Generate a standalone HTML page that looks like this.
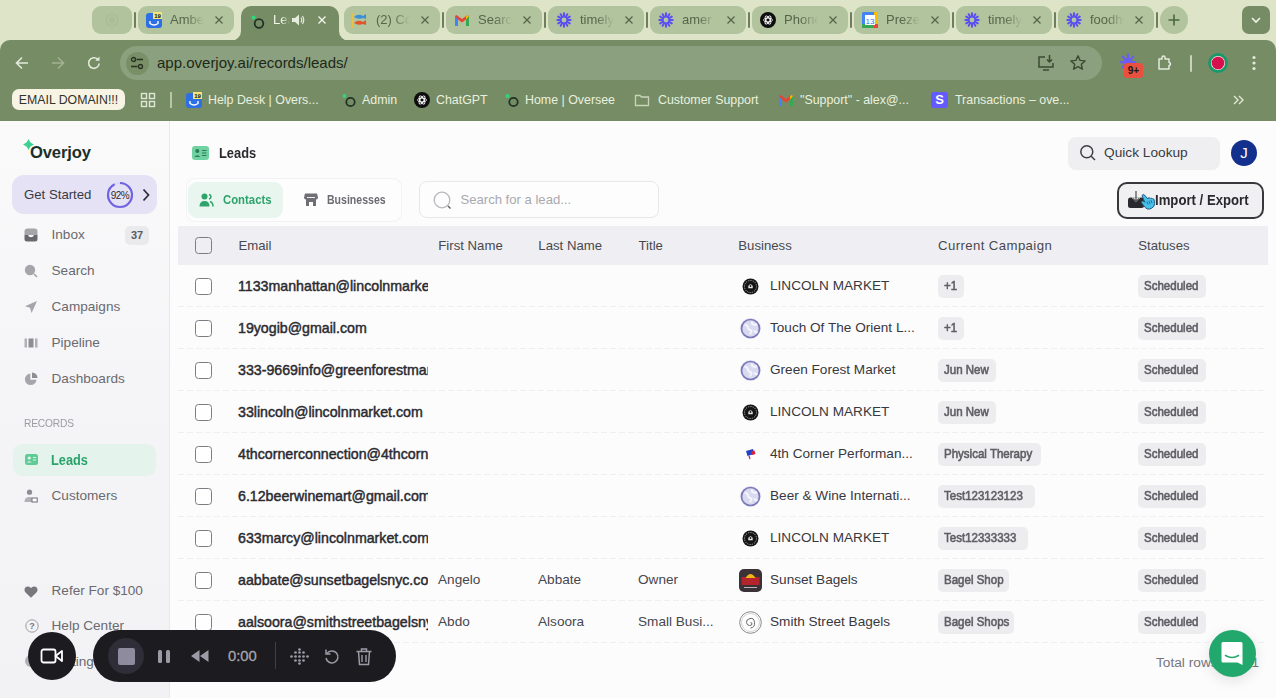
<!DOCTYPE html>
<html><head><meta charset="utf-8">
<style>
*{box-sizing:border-box;margin:0;padding:0}
html,body{width:1276px;height:698px;overflow:hidden;background:#dee4c7;font-family:"Liberation Sans",sans-serif;position:relative}
.a{position:absolute}
/* tabs */
.tab{position:absolute;top:6px;height:28px;width:96px;border-radius:9px;background:#b1c49e;overflow:hidden}
.tab .fv{position:absolute;left:8px;top:6px;width:16px;height:16px}
.tab .tt{position:absolute;left:32px;top:6px;font-size:13px;line-height:16px;color:#56664a;white-space:nowrap;width:36px;overflow:hidden;
 -webkit-mask-image:linear-gradient(90deg,#000 45%,transparent 95%)}
.tab .x{position:absolute;left:77px;top:10px;width:8px;height:8px}
.sep{position:absolute;top:12px;width:2px;height:16px;background:#6f7f5e;border-radius:1px}
#toolbar{position:absolute;left:0;top:40px;width:1276px;height:81px;background:#758c65;border-radius:10px 10px 0 0}
.bm{position:absolute;top:92px;font-size:12.4px;line-height:16px;color:#eaf0df;white-space:nowrap}
.bmi{position:absolute;top:92px;width:16px;height:16px}

#app{position:absolute;left:0;top:121px;width:1276px;height:577px;background:#fcfcfd;overflow:hidden}
#side{position:absolute;left:0;top:0;width:170px;height:577px;background:linear-gradient(180deg,#fafafb 0%,#f5f5f7 45%,#f2f2f4 100%);border-right:1px solid #e9e9ec}
.nav{position:absolute;left:51.5px;font-size:13.6px;line-height:16px;color:#6a6a70;white-space:nowrap}
.ni{position:absolute;left:24px;width:14px;height:14px}
.sx{display:inline-block;transform-origin:0 50%;white-space:nowrap}
.th{position:absolute;top:117px;font-size:13.2px;line-height:16px;color:#48484e;white-space:nowrap}
.cb{position:absolute;left:195px;width:17px;height:17px;border:1.5px solid #7c7c82;border-radius:3.5px;background:#fff}
.em{position:absolute;left:238px;width:190px;overflow:hidden;font-size:14.2px;font-weight:normal;line-height:18px;color:#2a2a2f;white-space:nowrap;-webkit-text-stroke:0.45px #2a2a2f}
.em span{display:inline-block;transform:scaleX(1.0);transform-origin:0 50%}
.tx{position:absolute;font-size:13.6px;line-height:18px;color:#47474d;white-space:nowrap}
.biz{position:absolute;left:770px;font-size:13.6px;line-height:18px;color:#38383e;white-space:nowrap}
.bi{position:absolute;left:740px;width:21px;height:21px}
.tag{position:absolute;height:23px;border-radius:5px;background:#ededf0;font-size:12.4px;font-weight:normal;line-height:23px;color:#5e5e64;white-space:nowrap;padding:0 6px;-webkit-text-stroke:0.6px #5e5e64}
.tag span{display:inline-block;transform:scaleX(0.93);transform-origin:0 50%}
.rl{position:absolute;left:178px;width:1086px;height:1px;background:repeating-linear-gradient(90deg,#efeff2 0 6px,transparent 6px 9px)}
</style></head><body>

<!-- ===== TAB STRIP ===== -->
<div class="tab" style="left:92px;width:40px;background:#b0c39c"><svg class="a" style="left:12px;top:6px" width="16" height="16" viewBox="0 0 16 16"><circle cx="8" cy="8" r="6" fill="none" stroke="#abbb97" stroke-width="1.2"/><circle cx="8" cy="8" r="3" fill="#abbb97"/></svg></div>
<div class="sep" style="left:134px"></div>

<div class="tab" style="left:138px">
 <svg class="fv" viewBox="0 0 16 16"><rect x="0" y="1" width="16" height="15" rx="3" fill="#2d6fe5"/><path d="M4 9v2.5q4 3 8 0V9" stroke="#fff" stroke-width="1.4" fill="none"/><rect x="7" y="0" width="9" height="7" fill="#f8e27a"/><text x="11.5" y="6" font-size="6" font-weight="bold" text-anchor="middle" fill="#111" font-family="Liberation Sans">19</text></svg>
 <div class="tt">Amber</div>
 <svg class="x" viewBox="0 0 8 8"><path d="M0.5 0.5L7.5 7.5M7.5 0.5L0.5 7.5" stroke="#56664a" stroke-width="1.3"/></svg>
</div>

<!-- active tab -->
<div class="a" style="left:231px;top:30px;width:118px;height:11px;background:#758c65"></div>
<div class="a" style="left:231px;top:30px;width:10px;height:11px;background:#dee4c7;border-radius:0 0 10px 0"></div>
<div class="a" style="left:339px;top:30px;width:10px;height:11px;background:#dee4c7;border-radius:0 0 0 10px"></div>
<div class="a" style="left:241px;top:6px;width:98px;height:30px;background:#758c65;border-radius:10px 10px 0 0"></div>
<svg class="a" style="left:250px;top:14px" width="16" height="16" viewBox="0 0 16 16"><circle cx="9" cy="9.5" r="4.3" fill="none" stroke="#1f3326" stroke-width="1.8"/><circle cx="3.5" cy="3.5" r="2" fill="#2fd67a"/></svg>
<div class="a" style="left:273px;top:12px;font-size:13px;line-height:16px;color:#f1f5ea;width:17px;overflow:hidden;white-space:nowrap;-webkit-mask-image:linear-gradient(90deg,#000 50%,transparent 100%)">Leads</div>
<svg class="a" style="left:291px;top:13px" width="14" height="14" viewBox="0 0 14 14"><path d="M1 5h3l4-3.5v11L4 9H1z" fill="#e6ecdc"/><path d="M10 4.5q1.5 2.5 0 5M11.5 3q2.5 4 0 8" stroke="#e6ecdc" stroke-width="1.2" fill="none"/></svg>
<svg class="a" style="left:318px;top:16px" width="8" height="8" viewBox="0 0 8 8"><path d="M0.5 0.5L7.5 7.5M7.5 0.5L0.5 7.5" stroke="#f1f5ea" stroke-width="1.4"/></svg>

<div class="tab" style="left:344px">
 <svg class="fv" viewBox="0 0 16 16"><rect x="0" y="1" width="1.2" height="15" fill="#e8c44a"/><path d="M2 5q4-4 9-1l3-2v5l-3-1q-5 2-9-1z" fill="#3b8fd8"/><path d="M2 11q4-4 9-1l3-2v5l-3-1q-5 2-9-1z" fill="#e0552c"/></svg>
 <div class="tt">(2) Cool</div>
 <svg class="x" viewBox="0 0 8 8"><path d="M0.5 0.5L7.5 7.5M7.5 0.5L0.5 7.5" stroke="#56664a" stroke-width="1.3"/></svg>
</div>
<div class="sep" style="left:442px"></div>
<div class="tab" style="left:446px">
 <svg class="fv" viewBox="0 0 16 16"><path d="M1 4v10h3V7.5l4 3 4-3V14h3V4l-1.5-1L8 7 2.5 3z" fill="#ea4335"/><path d="M1 4v10h3V7.5z" fill="#4285f4"/><path d="M12 7.5V14h3V4z" fill="#34a853"/><path d="M15 4l-3 3.5V4.5L13.5 3z" fill="#fbbc04"/></svg>
 <div class="tt">Search</div>
 <svg class="x" viewBox="0 0 8 8"><path d="M0.5 0.5L7.5 7.5M7.5 0.5L0.5 7.5" stroke="#56664a" stroke-width="1.3"/></svg>
</div>
<div class="sep" style="left:544px"></div>
<div class="tab" style="left:548px">
 <svg class="fv sun" viewBox="0 0 16 16"><g fill="#5a4ff2"><rect x="7" y="0.3" width="2" height="5" rx="1" transform="rotate(0 8 8)"/><rect x="7" y="0.3" width="2" height="5" rx="1" transform="rotate(30 8 8)"/><rect x="7" y="0.3" width="2" height="5" rx="1" transform="rotate(60 8 8)"/><rect x="7" y="0.3" width="2" height="5" rx="1" transform="rotate(90 8 8)"/><rect x="7" y="0.3" width="2" height="5" rx="1" transform="rotate(120 8 8)"/><rect x="7" y="0.3" width="2" height="5" rx="1" transform="rotate(150 8 8)"/><rect x="7" y="0.3" width="2" height="5" rx="1" transform="rotate(180 8 8)"/><rect x="7" y="0.3" width="2" height="5" rx="1" transform="rotate(210 8 8)"/><rect x="7" y="0.3" width="2" height="5" rx="1" transform="rotate(240 8 8)"/><rect x="7" y="0.3" width="2" height="5" rx="1" transform="rotate(270 8 8)"/><rect x="7" y="0.3" width="2" height="5" rx="1" transform="rotate(300 8 8)"/><rect x="7" y="0.3" width="2" height="5" rx="1" transform="rotate(330 8 8)"/></g><circle cx="8" cy="8" r="4.2" fill="#5a4ff2"/><circle cx="8" cy="8" r="2.4" fill="#b1c49e"/></svg>
 <div class="tt">timely</div>
 <svg class="x" viewBox="0 0 8 8"><path d="M0.5 0.5L7.5 7.5M7.5 0.5L0.5 7.5" stroke="#56664a" stroke-width="1.3"/></svg>
</div>
<div class="sep" style="left:646px"></div>
<div class="tab" style="left:650px">
 <svg class="fv" viewBox="0 0 16 16"><g fill="#5a4ff2"><rect x="7" y="0.3" width="2" height="5" rx="1" transform="rotate(0 8 8)"/><rect x="7" y="0.3" width="2" height="5" rx="1" transform="rotate(30 8 8)"/><rect x="7" y="0.3" width="2" height="5" rx="1" transform="rotate(60 8 8)"/><rect x="7" y="0.3" width="2" height="5" rx="1" transform="rotate(90 8 8)"/><rect x="7" y="0.3" width="2" height="5" rx="1" transform="rotate(120 8 8)"/><rect x="7" y="0.3" width="2" height="5" rx="1" transform="rotate(150 8 8)"/><rect x="7" y="0.3" width="2" height="5" rx="1" transform="rotate(180 8 8)"/><rect x="7" y="0.3" width="2" height="5" rx="1" transform="rotate(210 8 8)"/><rect x="7" y="0.3" width="2" height="5" rx="1" transform="rotate(240 8 8)"/><rect x="7" y="0.3" width="2" height="5" rx="1" transform="rotate(270 8 8)"/><rect x="7" y="0.3" width="2" height="5" rx="1" transform="rotate(300 8 8)"/><rect x="7" y="0.3" width="2" height="5" rx="1" transform="rotate(330 8 8)"/></g><circle cx="8" cy="8" r="4.2" fill="#5a4ff2"/><circle cx="8" cy="8" r="2.4" fill="#b1c49e"/></svg>
 <div class="tt">amer</div>
 <svg class="x" viewBox="0 0 8 8"><path d="M0.5 0.5L7.5 7.5M7.5 0.5L0.5 7.5" stroke="#56664a" stroke-width="1.3"/></svg>
</div>
<div class="sep" style="left:748px"></div>
<div class="tab" style="left:752px">
 <svg class="fv" viewBox="0 0 16 16"><circle cx="8" cy="8" r="8" fill="#0d0d0d"/><g fill="none" stroke="#fff" stroke-width="0.9"><ellipse cx="8" cy="8" rx="4.5" ry="2" /><ellipse cx="8" cy="8" rx="4.5" ry="2" transform="rotate(60 8 8)"/><ellipse cx="8" cy="8" rx="4.5" ry="2" transform="rotate(120 8 8)"/></g></svg>
 <div class="tt">Phone</div>
 <svg class="x" viewBox="0 0 8 8"><path d="M0.5 0.5L7.5 7.5M7.5 0.5L0.5 7.5" stroke="#56664a" stroke-width="1.3"/></svg>
</div>
<div class="sep" style="left:850px"></div>
<div class="tab" style="left:854px">
 <svg class="fv" viewBox="0 0 16 16"><rect x="0" y="0" width="16" height="16" rx="1.5" fill="#4285f4"/><rect x="0" y="12" width="12" height="4" fill="#34a853"/><rect x="12" y="0" width="4" height="12" fill="#fbbc04"/><rect x="12" y="12" width="4" height="4" fill="#ea4335"/><rect x="3" y="3" width="10" height="10" fill="#fff"/><text x="8" y="11.5" font-size="8" text-anchor="middle" fill="#1a73e8" font-family="Liberation Sans">13</text></svg>
 <div class="tt">Prezentar</div>
 <svg class="x" viewBox="0 0 8 8"><path d="M0.5 0.5L7.5 7.5M7.5 0.5L0.5 7.5" stroke="#56664a" stroke-width="1.3"/></svg>
</div>
<div class="sep" style="left:952px"></div>
<div class="tab" style="left:956px">
 <svg class="fv" viewBox="0 0 16 16"><g fill="#5a4ff2"><rect x="7" y="0.3" width="2" height="5" rx="1" transform="rotate(0 8 8)"/><rect x="7" y="0.3" width="2" height="5" rx="1" transform="rotate(30 8 8)"/><rect x="7" y="0.3" width="2" height="5" rx="1" transform="rotate(60 8 8)"/><rect x="7" y="0.3" width="2" height="5" rx="1" transform="rotate(90 8 8)"/><rect x="7" y="0.3" width="2" height="5" rx="1" transform="rotate(120 8 8)"/><rect x="7" y="0.3" width="2" height="5" rx="1" transform="rotate(150 8 8)"/><rect x="7" y="0.3" width="2" height="5" rx="1" transform="rotate(180 8 8)"/><rect x="7" y="0.3" width="2" height="5" rx="1" transform="rotate(210 8 8)"/><rect x="7" y="0.3" width="2" height="5" rx="1" transform="rotate(240 8 8)"/><rect x="7" y="0.3" width="2" height="5" rx="1" transform="rotate(270 8 8)"/><rect x="7" y="0.3" width="2" height="5" rx="1" transform="rotate(300 8 8)"/><rect x="7" y="0.3" width="2" height="5" rx="1" transform="rotate(330 8 8)"/></g><circle cx="8" cy="8" r="4.2" fill="#5a4ff2"/><circle cx="8" cy="8" r="2.4" fill="#b1c49e"/></svg>
 <div class="tt">timely</div>
 <svg class="x" viewBox="0 0 8 8"><path d="M0.5 0.5L7.5 7.5M7.5 0.5L0.5 7.5" stroke="#56664a" stroke-width="1.3"/></svg>
</div>
<div class="sep" style="left:1054px"></div>
<div class="tab" style="left:1058px">
 <svg class="fv" viewBox="0 0 16 16"><g fill="#5a4ff2"><rect x="7" y="0.3" width="2" height="5" rx="1" transform="rotate(0 8 8)"/><rect x="7" y="0.3" width="2" height="5" rx="1" transform="rotate(30 8 8)"/><rect x="7" y="0.3" width="2" height="5" rx="1" transform="rotate(60 8 8)"/><rect x="7" y="0.3" width="2" height="5" rx="1" transform="rotate(90 8 8)"/><rect x="7" y="0.3" width="2" height="5" rx="1" transform="rotate(120 8 8)"/><rect x="7" y="0.3" width="2" height="5" rx="1" transform="rotate(150 8 8)"/><rect x="7" y="0.3" width="2" height="5" rx="1" transform="rotate(180 8 8)"/><rect x="7" y="0.3" width="2" height="5" rx="1" transform="rotate(210 8 8)"/><rect x="7" y="0.3" width="2" height="5" rx="1" transform="rotate(240 8 8)"/><rect x="7" y="0.3" width="2" height="5" rx="1" transform="rotate(270 8 8)"/><rect x="7" y="0.3" width="2" height="5" rx="1" transform="rotate(300 8 8)"/><rect x="7" y="0.3" width="2" height="5" rx="1" transform="rotate(330 8 8)"/></g><circle cx="8" cy="8" r="4.2" fill="#5a4ff2"/><circle cx="8" cy="8" r="2.4" fill="#b1c49e"/></svg>
 <div class="tt">foodhub</div>
 <svg class="x" viewBox="0 0 8 8"><path d="M0.5 0.5L7.5 7.5M7.5 0.5L0.5 7.5" stroke="#56664a" stroke-width="1.3"/></svg>
</div>
<div class="sep" style="left:1156px"></div>
<div class="a" style="left:1160px;top:6px;width:28px;height:28px;border-radius:14px;background:#b1c49e"></div>
<svg class="a" style="left:1168px;top:14px" width="12" height="12" viewBox="0 0 12 12"><path d="M6 0.5v11M0.5 6h11" stroke="#4c663d" stroke-width="1.6"/></svg>
<div class="a" style="left:1242px;top:6px;width:28px;height:28px;border-radius:7px;background:#758c65"></div>
<svg class="a" style="left:1250px;top:16px" width="12" height="8" viewBox="0 0 12 8"><path d="M2 2l4 4 4-4" stroke="#f1f5ea" stroke-width="1.6" fill="none"/></svg>

<!-- ===== TOOLBAR ===== -->
<div id="toolbar"></div>
<svg class="a" style="left:14px;top:55px" width="16" height="16" viewBox="0 0 16 16"><path d="M14 8H2.5M8 2.5L2.5 8 8 13.5" stroke="#e4eadb" stroke-width="1.6" fill="none"/></svg>
<svg class="a" style="left:50px;top:55px" width="16" height="16" viewBox="0 0 16 16"><path d="M2 8h11.5M8 2.5L13.5 8 8 13.5" stroke="#a3b291" stroke-width="1.6" fill="none"/></svg>
<svg class="a" style="left:86px;top:55px" width="16" height="16" viewBox="0 0 16 16"><path d="M13.2 8.5A5.3 5.3 0 1 1 11.6 4.2" stroke="#e4eadb" stroke-width="1.6" fill="none"/><path d="M13.5 1.5v4.3H9.2z" fill="#e4eadb"/></svg>
<div class="a" style="left:120px;top:46px;width:982px;height:34px;border-radius:17px;background:#8aa07e"></div>
<div class="a" style="left:125.5px;top:51.5px;width:23px;height:23px;border-radius:12px;background:#788f68"></div>
<svg class="a" style="left:130px;top:56px" width="14" height="14" viewBox="0 0 14 14"><g stroke="#27321f" stroke-width="1.3" fill="none"><circle cx="3.5" cy="3.5" r="2"/><path d="M6.5 3.5H13M1 10.5h6.5"/><circle cx="10.5" cy="10.5" r="2"/></g></svg>
<div class="a" style="left:157px;top:54px;font-size:15px;line-height:18px;color:#1e2818;white-space:nowrap">app.overjoy.ai/records/leads/</div>
<svg class="a" style="left:1037px;top:54px" width="18" height="18" viewBox="0 0 18 18"><g stroke="#3d4a33" stroke-width="1.5" fill="none"><path d="M8 3H2v10h14V9"/><path d="M6 16h6"/><path d="M12.5 1v7M10 5.5l2.5 2.5 2.5-2.5"/></g></svg>
<svg class="a" style="left:1069px;top:54px" width="18" height="18" viewBox="0 0 18 18"><path d="M9 1.8l2.1 4.6 5 .5-3.8 3.4 1.1 4.9L9 12.6l-4.4 2.6 1.1-4.9L1.9 6.9l5-.5z" stroke="#3d4a33" stroke-width="1.4" fill="none" stroke-linejoin="round"/></svg>
<svg class="a" style="left:1119px;top:53px" width="18" height="18" viewBox="0 0 16 16"><g stroke="#6a5ef2" stroke-width="2" stroke-linecap="round"><path d="M8 1.5v13M1.5 8h13M3.4 3.4l9.2 9.2M12.6 3.4l-9.2 9.2"/></g><circle cx="8" cy="8" r="3.6" fill="#6a5ef2"/></svg>
<div class="a" style="left:1124px;top:63px;width:19px;height:15px;border-radius:3px;background:#e9503f;font-size:10px;font-weight:bold;line-height:15px;text-align:center;color:#1a1a1a">9+</div>
<svg class="a" style="left:1156px;top:54px" width="18" height="18" viewBox="0 0 18 18"><path d="M3 5h3V3.5a1.5 1.5 0 0 1 3 0V5h4v3.5a1.5 1.5 0 0 1 0 3V15H3z" stroke="#e4eadb" stroke-width="1.5" fill="none" stroke-linejoin="round"/></svg>
<div class="a" style="left:1190px;top:55px;width:2px;height:17px;background:#c8d3bb;border-radius:1px"></div>
<svg class="a" style="left:1208px;top:53px" width="20" height="20" viewBox="0 0 20 20"><circle cx="10" cy="10" r="8.6" fill="none" stroke="#169a6b" stroke-width="2.6"/><circle cx="10" cy="10" r="7" fill="#f3dfe3"/><circle cx="10" cy="10" r="6.3" fill="#d60f4d"/></svg>
<svg class="a" style="left:1251px;top:55px" width="6" height="16" viewBox="0 0 6 16"><g fill="#e4eadb"><circle cx="3" cy="2.5" r="1.6"/><circle cx="3" cy="8" r="1.6"/><circle cx="3" cy="13.5" r="1.6"/></g></svg>

<!-- ===== BOOKMARKS ===== -->
<div class="a" style="left:12px;top:89px;width:113px;height:21px;border-radius:7px;background:#f7f4e4;font-size:12.3px;line-height:22px;color:#33312b;text-align:center;white-space:nowrap">EMAIL DOMAIN!!!</div>
<svg class="a" style="left:140px;top:92px" width="16" height="16" viewBox="0 0 16 16"><g stroke="#dfe7d4" stroke-width="1.4" fill="none"><rect x="1.5" y="1.5" width="5" height="5"/><rect x="9.5" y="1.5" width="5" height="5"/><rect x="1.5" y="9.5" width="5" height="5"/><rect x="9.5" y="9.5" width="5" height="5"/></g></svg>
<div class="a" style="left:170px;top:92px;width:1.5px;height:16px;background:#b9c6aa"></div>
<svg class="bmi" style="left:186px" viewBox="0 0 16 16"><rect x="0" y="1" width="16" height="15" rx="3" fill="#2d6fe5"/><path d="M4 9v2.5q4 3 8 0V9" stroke="#fff" stroke-width="1.4" fill="none"/><rect x="7" y="0" width="9" height="7" fill="#f8e27a"/><text x="11.5" y="6" font-size="6" font-weight="bold" text-anchor="middle" fill="#111" font-family="Liberation Sans">19</text></svg>
<div class="bm" style="left:208px">Help Desk | Overs...</div>
<svg class="bmi" style="left:341px" viewBox="0 0 16 16"><circle cx="9.5" cy="10" r="4.2" fill="none" stroke="#1f3326" stroke-width="1.8"/><circle cx="3.5" cy="4" r="2" fill="#2fd67a"/></svg>
<div class="bm" style="left:362px">Admin</div>
<svg class="bmi" style="left:414px" viewBox="0 0 16 16"><circle cx="8" cy="8" r="8" fill="#0d0d0d"/><g fill="none" stroke="#fff" stroke-width="0.9"><ellipse cx="8" cy="8" rx="4.5" ry="2" /><ellipse cx="8" cy="8" rx="4.5" ry="2" transform="rotate(60 8 8)"/><ellipse cx="8" cy="8" rx="4.5" ry="2" transform="rotate(120 8 8)"/></g></svg>
<div class="bm" style="left:436px">ChatGPT</div>
<svg class="bmi" style="left:504px" viewBox="0 0 16 16"><circle cx="9.5" cy="10" r="4.2" fill="none" stroke="#1f3326" stroke-width="1.8"/><circle cx="3.5" cy="4" r="2" fill="#2fd67a"/></svg>
<div class="bm" style="left:525px">Home | Oversee</div>
<svg class="bmi" style="left:634px" viewBox="0 0 16 16"><path d="M1.5 3.5h4.5l1.5 1.5h7v8.5h-13z" stroke="#c9d4bb" stroke-width="1.3" fill="none"/></svg>
<div class="bm" style="left:658px">Customer Support</div>
<svg class="bmi" style="left:778px" viewBox="0 0 16 16"><path d="M1 4v10h3V7.5l4 3 4-3V14h3V4l-1.5-1L8 7 2.5 3z" fill="#ea4335"/><path d="M1 4v10h3V7.5z" fill="#4285f4"/><path d="M12 7.5V14h3V4z" fill="#34a853"/><path d="M15 4l-3 3.5V4.5L13.5 3z" fill="#fbbc04"/></svg>
<div class="bm" style="left:800px">"Support" - alex@...</div>
<div class="bmi" style="left:931px;width:17px;height:16px;border-radius:3px;background:#635bff;color:#fff;font-weight:bold;font-size:13px;line-height:16px;text-align:center">S</div>
<div class="bm" style="left:955px">Transactions – ove...</div>
<svg class="a" style="left:1232px;top:93px" width="14" height="14" viewBox="0 0 14 14"><path d="M2 3l4 4-4 4M7 3l4 4-4 4" stroke="#dfe7d4" stroke-width="1.4" fill="none"/></svg>


<!-- ===== APP ===== -->
<div id="app">
 <div id="side">
  <svg class="a" style="left:23px;top:17.5px" width="11" height="11" viewBox="0 0 12 12"><path d="M6 0Q7.6 4.4 12 6 7.6 7.6 6 12 4.4 7.6 0 6 4.4 4.4 6 0z" fill="#3dd093"/></svg>
  <div class="a" style="left:30px;top:21px;font-size:16.6px;font-weight:bold;line-height:21px;color:#1b2f29;letter-spacing:-0.15px">Overjoy</div>
  <div class="a" style="left:12px;top:54px;width:145px;height:39px;border-radius:12px;background:#e5e2f6"></div>
  <div class="a" style="left:24px;top:65px;font-size:13.2px;line-height:17px;color:#3a3a44;white-space:nowrap">Get Started</div>
  <svg class="a" style="left:106px;top:60px" width="28" height="28" viewBox="0 0 28 28"><circle cx="14" cy="14" r="12" fill="none" stroke="#dcd8f3" stroke-width="2.2"/><circle cx="14" cy="14" r="12" fill="none" stroke="#7063e2" stroke-width="2.2" stroke-dasharray="69.4 75.4" transform="rotate(-90 14 14)"/><text x="14" y="17.6" font-size="10" text-anchor="middle" fill="#2a2a33" font-family="Liberation Sans" letter-spacing="-0.5">92%</text></svg>
  <svg class="a" style="left:141px;top:67px" width="10" height="14" viewBox="0 0 10 14"><path d="M2.5 1.5l5 5.5-5 5.5" stroke="#2a2a33" stroke-width="1.7" fill="none"/></svg>

  <svg class="ni" style="top:107px" viewBox="0 0 14 14"><path d="M0.5 3.5q0-3 3-3h7q3 0 3 3V7H0.5z" fill="#a5a5aa"/><path d="M0.5 7h3.5q.8 2.2 3 2.2t3-2.2h3.5v4q0 2.5-2.5 2.5H3q-2.5 0-2.5-2.5z" fill="#68686e"/></svg>
  <div class="nav" style="top:106px">Inbox</div>
  <div class="a" style="left:125px;top:104.5px;width:24px;height:19px;border-radius:5px;background:#eaeaed;font-size:11px;font-weight:bold;line-height:19px;text-align:center;color:#5a5a60">37</div>
  <svg class="ni" style="top:143px" viewBox="0 0 14 14"><circle cx="6" cy="6" r="5.2" fill="#a5a5ab"/><path d="M10 10l3 3" stroke="#a5a5ab" stroke-width="1.6"/></svg>
  <div class="nav" style="top:142px">Search</div>
  <svg class="ni" style="top:179px" viewBox="0 0 14 14"><path d="M13 1L1 6.2l5 1.6 1.6 5.2z" fill="#a5a5ab"/></svg>
  <div class="nav" style="top:178px">Campaigns</div>
  <svg class="ni" style="top:215px" viewBox="0 0 14 14"><rect x="0.5" y="2.5" width="2.5" height="9" fill="#b0b0b5"/><rect x="4.5" y="2.5" width="5" height="9" fill="#8d8d93"/><rect x="11" y="2.5" width="2.5" height="9" fill="#b0b0b5"/></svg>
  <div class="nav" style="top:214px">Pipeline</div>
  <svg class="ni" style="top:251px" viewBox="0 0 14 14"><path d="M6.3 1.5A5.8 5.8 0 1 0 12.5 7.7H6.3z" fill="#a5a5ab"/><path d="M8 0.5A5.5 5.5 0 0 1 13.5 6H8z" fill="#8d8d93"/></svg>
  <div class="nav" style="top:250px">Dashboards</div>

  <div class="a" style="left:23.5px;top:295px;font-size:11px;line-height:14px;color:#9b9ba1;letter-spacing:-0.2px"><span class="sx" style="transform:scaleX(0.93)">RECORDS</span></div>
  <div class="a" style="left:13px;top:323px;width:143px;height:32px;border-radius:9px;background:#e4f3eb"></div>
  <svg class="a" style="left:25px;top:333px" width="13" height="11" viewBox="0 0 13 11"><rect x="0" y="0" width="13" height="11" rx="2.5" fill="#5fcb95"/><circle cx="4.2" cy="4" r="1.6" fill="#e4f3eb"/><path d="M1.8 8.6q2.4-2.6 4.8 0z" fill="#e4f3eb"/><path d="M8 3.5h3M8 6h3" stroke="#e4f3eb" stroke-width="1"/></svg>
  <div class="a" style="left:51px;top:331px;font-size:14.5px;font-weight:bold;line-height:17px;color:#2aa36a;white-space:nowrap"><span class="sx" style="transform:scaleX(0.88)">Leads</span></div>
  <svg class="ni" style="top:368px" viewBox="0 0 14 14"><circle cx="5.5" cy="3.2" r="2.6" fill="#8d8d93"/><path d="M0.5 13q0-5 5-5 3 0 4 1.5V13z" fill="#b0b0b5"/><rect x="8" y="9" width="5.2" height="4" fill="#fff" stroke="#7a7a80" stroke-width="1.1"/></svg>
  <div class="nav" style="top:367px">Customers</div>

  <svg class="ni" style="top:464px" viewBox="0 0 14 14"><path d="M7 12.8L1.6 7.6Q-0.5 5.2 1.3 2.6 3.6 0.3 7 3 10.4 0.3 12.7 2.6 14.5 5.2 12.4 7.6z" fill="#77777d"/></svg>
  <div class="nav" style="top:462px">Refer For $100</div>
  <svg class="ni" style="top:498px;left:25px" viewBox="0 0 14 14"><circle cx="7" cy="7" r="6.2" fill="none" stroke="#9b9ba1" stroke-width="1"/><text x="7" y="10.3" font-size="9" text-anchor="middle" fill="#77777d" font-family="Liberation Sans" font-weight="bold">?</text></svg>
  <div class="nav" style="top:497px">Help Center</div>
  <svg class="ni" style="top:533px" viewBox="0 0 14 14"><circle cx="7" cy="7" r="6" fill="#b0b0b5"/></svg>
  <div class="nav" style="top:533px">Settings</div>
 </div>

 <!-- main header -->
 <svg class="a" style="left:192px;top:25px" width="17" height="14" viewBox="0 0 17 14"><rect x="0" y="0" width="17" height="14" rx="3" fill="#6fd2a0"/><circle cx="5.3" cy="5" r="2" fill="#2f7a57"/><path d="M2.3 11q3-3.5 6 0z" fill="#2f7a57"/><path d="M10 4.5h4.5M10 7h4.5M10 9.5h4.5" stroke="#2f7a57" stroke-width="1.1"/></svg>
 <div class="a" style="left:219px;top:23px;font-size:14.8px;font-weight:bold;line-height:18px;color:#2a2a2f;white-space:nowrap"><span class="sx" style="transform:scaleX(0.87)">Leads</span></div>

 <div class="a" style="left:186px;top:57px;width:216px;height:44px;border:1px solid #f3f3f5;border-radius:9px;background:#fdfdfe"></div>
 <div class="a" style="left:188px;top:61px;width:95px;height:36px;border-radius:9px;background:#e8f6ef"></div>
 <svg class="a" style="left:199px;top:72px" width="15" height="15" viewBox="0 0 15 15"><circle cx="5.5" cy="3.5" r="3" fill="#2fa36b"/><path d="M0.5 13.5q0-5.5 5-5.5t5 5.5z" fill="#2fa36b"/><path d="M10 1.5q2 .5 2 2.3t-2 2.2" stroke="#2fa36b" stroke-width="1.5" fill="none"/><path d="M11 8.5q3 1 3 5" stroke="#2fa36b" stroke-width="1.5" fill="none"/></svg>
 <div class="a" style="left:223px;top:71px;font-size:13.2px;font-weight:bold;line-height:16px;color:#2fa36b;white-space:nowrap"><span class="sx" style="transform:scaleX(0.86)">Contacts</span></div>
 <svg class="a" style="left:304px;top:71px" width="14" height="15" viewBox="0 0 14 15"><path d="M1 1.5h12l1 4q0 2-2 2v6.5H9V10H5v4H2V7.5q-2 0-2-2z" fill="#6e6e74"/><path d="M3 5.5h8" stroke="#fdfdfe" stroke-width="0.9"/></svg>
 <div class="a" style="left:327px;top:71px;font-size:13.2px;font-weight:bold;line-height:16px;color:#6c6c72;white-space:nowrap"><span class="sx" style="transform:scaleX(0.80)">Businesses</span></div>

 <div class="a" style="left:419px;top:60px;width:240px;height:37px;border:1px solid #e8e8eb;border-radius:8px;background:#fdfdfe"></div>
 <svg class="a" style="left:433px;top:70px" width="20" height="20" viewBox="0 0 20 20"><circle cx="9" cy="9" r="7.8" fill="none" stroke="#b9b9be" stroke-width="1.3"/><path d="M15 15l2.5 2.5" stroke="#55555b" stroke-width="1.3"/></svg>
 <div class="a" style="left:460.5px;top:70px;font-size:13.1px;line-height:17px;color:#a9a9ae;white-space:nowrap">Search for a lead...</div>

 <div class="a" style="left:1068px;top:15.5px;width:152px;height:33.5px;border-radius:8px;background:#efeff2"></div>
 <svg class="a" style="left:1079px;top:23px" width="18" height="18" viewBox="0 0 18 18"><circle cx="7.8" cy="7.8" r="6" fill="none" stroke="#3f3f45" stroke-width="1.5"/><path d="M12.2 12.2l3.8 3.8" stroke="#3f3f45" stroke-width="1.5"/></svg>
 <div class="a" style="left:1104px;top:23px;font-size:13.7px;line-height:18px;color:#3a3a40;white-space:nowrap">Quick Lookup</div>
 <div class="a" style="left:1231px;top:19px;width:26px;height:26px;border-radius:13px;background:#13308c;color:#fff;font-size:15px;line-height:26px;text-align:center">J</div>

 <div class="a" style="left:1117px;top:60.5px;width:147px;height:37px;border:2px solid #38383c;border-radius:10px;background:#f0f0f2"></div>
 <svg class="a" style="left:1126px;top:68px" width="30" height="22" viewBox="0 0 30 22"><rect x="2" y="8.5" width="16" height="10.5" rx="2.5" fill="#2a2a2e"/><path d="M5.5 8.5L10 13.2 14.5 8.5z" fill="#f1f1f3"/><path d="M10 2v10.5M7 9.5l3 3 3-3" stroke="#555" stroke-width="1.3" fill="none"/><path d="M16 6.5q1.2-1.8 2.6-.4l3.2 3.8.4-1q1.4-.6 2 .6l.3-.3q1.3-.5 1.9.8l.2-.2q1.3-.3 1.6 1.1l.3 3.6q.2 3.2-2.6 4.6l-2.2.9q-2.6.6-4.4-1.4l-3.6-4.6q-.8-1.2.4-1.9 1-.5 1.9.4l.9.9z" fill="#49c0ea" stroke="#1d5b82" stroke-width="1"/><path d="M21 12.5l1.2 3.2M23 11.8l1.2 3.2M25 11.2l1 3" stroke="#1d5b82" stroke-width="0.8"/></svg>
 <div class="a" style="left:1155px;top:70px;font-size:14.3px;font-weight:bold;line-height:18px;color:#2a2a2e;white-space:nowrap"><span class="sx" style="transform:scaleX(0.92)">Import / Export</span></div>

 <!-- table header -->
 <div class="a" style="left:178px;top:105px;width:1090px;height:39px;background:#efeff3"></div>
 <div class="cb" style="top:116px;background:transparent"></div>
 <div class="th" style="left:238.5px">Email</div>
 <div class="th" style="left:438.3px">First Name</div>
 <div class="th" style="left:538.3px">Last Name</div>
 <div class="th" style="left:638.5px">Title</div>
 <div class="th" style="left:738.3px">Business</div>
 <div class="th" style="left:938px;letter-spacing:0.4px">Current Campaign</div>
 <div class="th" style="left:1138.3px">Statuses</div>
 <div class="cb" style="top:156.5px"></div>
 <div class="em" style="top:156px"><span>1133manhattan@lincolnmarket.com</span></div>
 <svg class="bi" style="top:154.5px" viewBox="0 0 21 21"><circle cx="10.5" cy="10.5" r="8" fill="#161616"/><circle cx="10.5" cy="10.5" r="6" fill="none" stroke="#d8d8d8" stroke-width="1" stroke-dasharray="0.9 1.4"/><circle cx="10.5" cy="10.5" r="4.2" fill="#161616"/><path d="M8.3 12.2q-.5-3.5 2.2-4 2.7.5 2.2 4z" fill="#e6e6e6"/><circle cx="10.5" cy="10" r="0.9" fill="#161616"/></svg>
 <div class="biz" style="top:156px">LINCOLN MARKET</div>
 <div class="tag" style="left:938px;top:153.5px;width:26px"><span>+1</span></div>
 <div class="tag" style="left:1138px;top:153.5px;width:68px"><span>Scheduled</span></div>
 <div class="rl" style="top:185px"></div>
 <div class="cb" style="top:198.5px"></div>
 <div class="em" style="top:198px"><span>19yogib@gmail.com</span></div>
 <svg class="bi" style="top:196.5px" viewBox="0 0 21 21"><circle cx="10.5" cy="10.5" r="10.4" fill="#dedcf3" opacity="0.8"/><circle cx="10.5" cy="10.5" r="9" fill="#d9d9f0" stroke="#7b7ab8" stroke-width="1.7"/><path d="M4.5 6.5q3 .5 3.5 3t2.5 2.5-.5 4.5M12 3.5q-.5 2.5 1.5 3t3.5-.5M13.5 13.5q2.5-.5 3.5 1.5" stroke="#f4f4fc" stroke-width="2.2" fill="none"/></svg>
 <div class="biz" style="top:198px">Touch Of The Orient L...</div>
 <div class="tag" style="left:938px;top:195.5px;width:26px"><span>+1</span></div>
 <div class="tag" style="left:1138px;top:195.5px;width:68px"><span>Scheduled</span></div>
 <div class="rl" style="top:227px"></div>
 <div class="cb" style="top:240.5px"></div>
 <div class="em" style="top:240px"><span>333-9669info@greenforestmarket.com</span></div>
 <svg class="bi" style="top:238.5px" viewBox="0 0 21 21"><circle cx="10.5" cy="10.5" r="10.4" fill="#dedcf3" opacity="0.8"/><circle cx="10.5" cy="10.5" r="9" fill="#d9d9f0" stroke="#7b7ab8" stroke-width="1.7"/><path d="M4.5 6.5q3 .5 3.5 3t2.5 2.5-.5 4.5M12 3.5q-.5 2.5 1.5 3t3.5-.5M13.5 13.5q2.5-.5 3.5 1.5" stroke="#f4f4fc" stroke-width="2.2" fill="none"/></svg>
 <div class="biz" style="top:240px">Green Forest Market</div>
 <div class="tag" style="left:938px;top:237.5px;width:58px"><span>Jun New</span></div>
 <div class="tag" style="left:1138px;top:237.5px;width:68px"><span>Scheduled</span></div>
 <div class="rl" style="top:269px"></div>
 <div class="cb" style="top:282.5px"></div>
 <div class="em" style="top:282px"><span>33lincoln@lincolnmarket.com</span></div>
 <svg class="bi" style="top:280.5px" viewBox="0 0 21 21"><circle cx="10.5" cy="10.5" r="8" fill="#161616"/><circle cx="10.5" cy="10.5" r="6" fill="none" stroke="#d8d8d8" stroke-width="1" stroke-dasharray="0.9 1.4"/><circle cx="10.5" cy="10.5" r="4.2" fill="#161616"/><path d="M8.3 12.2q-.5-3.5 2.2-4 2.7.5 2.2 4z" fill="#e6e6e6"/><circle cx="10.5" cy="10" r="0.9" fill="#161616"/></svg>
 <div class="biz" style="top:282px">LINCOLN MARKET</div>
 <div class="tag" style="left:938px;top:279.5px;width:58px"><span>Jun New</span></div>
 <div class="tag" style="left:1138px;top:279.5px;width:68px"><span>Scheduled</span></div>
 <div class="rl" style="top:311px"></div>
 <div class="cb" style="top:324.5px"></div>
 <div class="em" style="top:324px"><span>4thcornerconnection@4thcorner.com</span></div>
 <svg class="bi" style="top:322.5px" viewBox="0 0 21 21"><path d="M6 7l7-2 1.5 5-7 2z" fill="#2340c8"/><path d="M11 7.5l3.5-1 1 3.5-3.5 1z" fill="#d3233a"/><path d="M9 12l1 3" stroke="#d3233a" stroke-width="1.2"/></svg>
 <div class="biz" style="top:324px">4th Corner Performan...</div>
 <div class="tag" style="left:938px;top:321.5px;width:103px"><span>Physical Therapy</span></div>
 <div class="tag" style="left:1138px;top:321.5px;width:68px"><span>Scheduled</span></div>
 <div class="rl" style="top:353px"></div>
 <div class="cb" style="top:366.5px"></div>
 <div class="em" style="top:366px"><span>6.12beerwinemart@gmail.com</span></div>
 <svg class="bi" style="top:364.5px" viewBox="0 0 21 21"><circle cx="10.5" cy="10.5" r="10.4" fill="#dedcf3" opacity="0.8"/><circle cx="10.5" cy="10.5" r="9" fill="#d9d9f0" stroke="#7b7ab8" stroke-width="1.7"/><path d="M4.5 6.5q3 .5 3.5 3t2.5 2.5-.5 4.5M12 3.5q-.5 2.5 1.5 3t3.5-.5M13.5 13.5q2.5-.5 3.5 1.5" stroke="#f4f4fc" stroke-width="2.2" fill="none"/></svg>
 <div class="biz" style="top:366px">Beer &amp; Wine Internati...</div>
 <div class="tag" style="left:938px;top:363.5px;width:97px"><span>Test123123123</span></div>
 <div class="tag" style="left:1138px;top:363.5px;width:68px"><span>Scheduled</span></div>
 <div class="rl" style="top:395px"></div>
 <div class="cb" style="top:408.5px"></div>
 <div class="em" style="top:408px"><span>633marcy@lincolnmarket.com</span></div>
 <svg class="bi" style="top:406.5px" viewBox="0 0 21 21"><circle cx="10.5" cy="10.5" r="8" fill="#161616"/><circle cx="10.5" cy="10.5" r="6" fill="none" stroke="#d8d8d8" stroke-width="1" stroke-dasharray="0.9 1.4"/><circle cx="10.5" cy="10.5" r="4.2" fill="#161616"/><path d="M8.3 12.2q-.5-3.5 2.2-4 2.7.5 2.2 4z" fill="#e6e6e6"/><circle cx="10.5" cy="10" r="0.9" fill="#161616"/></svg>
 <div class="biz" style="top:408px">LINCOLN MARKET</div>
 <div class="tag" style="left:938px;top:405.5px;width:90px"><span>Test12333333</span></div>
 <div class="tag" style="left:1138px;top:405.5px;width:68px"><span>Scheduled</span></div>
 <div class="rl" style="top:437px"></div>
 <div class="cb" style="top:450.5px"></div>
 <div class="em" style="top:450px"><span>aabbate@sunsetbagelsnyc.com</span></div>
 <div class="tx" style="left:438px;top:450px">Angelo</div>
 <div class="tx" style="left:538px;top:450px">Abbate</div>
 <div class="tx" style="left:638px;top:450px">Owner</div>
 <svg class="bi" style="top:447.5px;left:739px;width:23px;height:23px" viewBox="0 0 23 23"><rect x="0" y="0" width="23" height="23" rx="5" fill="#3a3236"/><rect x="2.5" y="8" width="18" height="8" fill="#b3242c"/><path d="M6.5 9q5-8 10 0z" fill="#f3b416"/><path d="M5 18.5h13" stroke="#d8d8d8" stroke-width="0.8"/></svg>
 <div class="biz" style="top:450px">Sunset Bagels</div>
 <div class="tag" style="left:938px;top:447.5px;width:71px"><span>Bagel Shop</span></div>
 <div class="tag" style="left:1138px;top:447.5px;width:68px"><span>Scheduled</span></div>
 <div class="rl" style="top:479px"></div>
 <div class="cb" style="top:492.5px"></div>
 <div class="em" style="top:492px"><span>aalsoora@smithstreetbagelsnyc.com</span></div>
 <div class="tx" style="left:438px;top:492px">Abdo</div>
 <div class="tx" style="left:538px;top:492px">Alsoora</div>
 <div class="tx" style="left:638px;top:492px">Small Busi...</div>
 <svg class="bi" style="top:489.5px;left:738.5px;width:23px;height:23px" viewBox="0 0 23 23"><circle cx="11.5" cy="11.5" r="10.8" fill="#fff" stroke="#7a7a7a" stroke-width="0.9"/><circle cx="11.5" cy="11.5" r="9" fill="none" stroke="#b5b5b5" stroke-width="0.6"/><path d="M11.5 11.5q1.5 0 1.5 1.5t-2.5 1.5-3-3 3.5-4 4.5 4-4 5.5" stroke="#555" stroke-width="0.9" fill="none"/></svg>
 <div class="biz" style="top:492px">Smith Street Bagels</div>
 <div class="tag" style="left:938px;top:489.5px;width:76px"><span>Bagel Shops</span></div>
 <div class="tag" style="left:1138px;top:489.5px;width:68px"><span>Scheduled</span></div>
 <div class="rl" style="top:521px"></div>

 <div class="a" style="left:1156px;top:533px;font-size:13.7px;line-height:18px;color:#76767c;white-space:nowrap">Total rows</div>
 <div class="a" style="left:1199px;top:533px;width:60px;text-align:right;font-size:13.7px;line-height:18px;color:#76767c;white-space:nowrap">: 361</div>
 <div class="a" style="left:1208.5px;top:509px;width:47px;height:47px;border-radius:24px;background:#22a86d;box-shadow:0 4px 14px rgba(0,0,0,0.10)"></div>
 <svg class="a" style="left:1220px;top:520px" width="24" height="26" viewBox="0 0 24 26"><path d="M3 1h18q1.5 0 1.5 1.5V24l-5-2.5H3Q1.5 21.5 1.5 20V2.5Q1.5 1 3 1z" fill="#fff"/><path d="M5.5 14.5q6.5 4 13 0" stroke="#22a86d" stroke-width="1.5" fill="none" stroke-linecap="round"/></svg>

 <!-- recorder -->
 <div class="a" style="left:28px;top:511px;width:48px;height:48px;border-radius:24px;background:#1c1b1f"></div>
 <svg class="a" style="left:40px;top:525px" width="24" height="20" viewBox="0 0 24 20"><rect x="1.5" y="3.5" width="14" height="13" rx="2" fill="none" stroke="#fff" stroke-width="1.8"/><path d="M15.5 10l6.5-5v10z" fill="none" stroke="#fff" stroke-width="1.8" stroke-linejoin="round"/></svg>
 <div class="a" style="left:92.5px;top:509px;width:303.5px;height:52px;border-radius:26px;background:#1c1b1f"></div>
 <div class="a" style="left:108px;top:517px;width:36px;height:36px;border-radius:18px;background:#2f2d38"></div>
 <div class="a" style="left:117.5px;top:526.5px;width:17px;height:17px;border-radius:2px;background:#8f8b9f"></div>
 <div class="a" style="left:157.5px;top:528.5px;width:4.5px;height:13px;border-radius:1.5px;background:#9c9aa6"></div>
 <div class="a" style="left:165.5px;top:528.5px;width:4.5px;height:13px;border-radius:1.5px;background:#9c9aa6"></div>
 <svg class="a" style="left:190px;top:528px" width="19" height="14" viewBox="0 0 19 14"><path d="M9.5 1L1 7l8.5 6zM18.5 1L10 7l8.5 6z" fill="#9c9aa6"/></svg>
 <div class="a" style="left:228px;top:526px;font-size:14.8px;line-height:18px;color:#a6a4ae;white-space:nowrap;-webkit-text-stroke:0.3px #a6a4ae">0:00</div>
 <div class="a" style="left:275px;top:521px;width:1px;height:27px;background:#403f46"></div>
 <svg class="a" style="left:290px;top:527px" width="19" height="17" viewBox="0 0 19 17"><g fill="#9c9aa6"><circle cx="9.5" cy="1.5" r="1.35"/><circle cx="5.5" cy="4.5" r="1.35"/><circle cx="9.5" cy="4.5" r="1.35"/><circle cx="13.5" cy="4.5" r="1.35"/><circle cx="1.5" cy="8.5" r="1.35"/><circle cx="5.5" cy="8.5" r="1.35"/><circle cx="9.5" cy="8.5" r="1.35"/><circle cx="13.5" cy="8.5" r="1.35"/><circle cx="17.5" cy="8.5" r="1.35"/><circle cx="5.5" cy="12.5" r="1.35"/><circle cx="9.5" cy="12.5" r="1.35"/><circle cx="13.5" cy="12.5" r="1.35"/><circle cx="9.5" cy="15.5" r="1.35"/></g></svg>
 <svg class="a" style="left:324px;top:527px" width="16" height="17" viewBox="0 0 16 17"><path d="M3 5.5A6 6 0 1 1 2 10" stroke="#9c9aa6" stroke-width="1.5" fill="none"/><path d="M2 1.5v4.5h4.5" stroke="#9c9aa6" stroke-width="1.5" fill="none"/></svg>
 <svg class="a" style="left:355px;top:526px" width="18" height="19" viewBox="0 0 18 19"><path d="M1.5 4.5h15M6.5 4.5V2h5v2.5" stroke="#9c9aa6" stroke-width="1.5" fill="none"/><path d="M3.5 4.5l1 13h9l1-13" stroke="#9c9aa6" stroke-width="1.5" fill="none"/><path d="M7 8v7M11 8v7" stroke="#9c9aa6" stroke-width="1.4"/></svg>
</div>
</body></html>
